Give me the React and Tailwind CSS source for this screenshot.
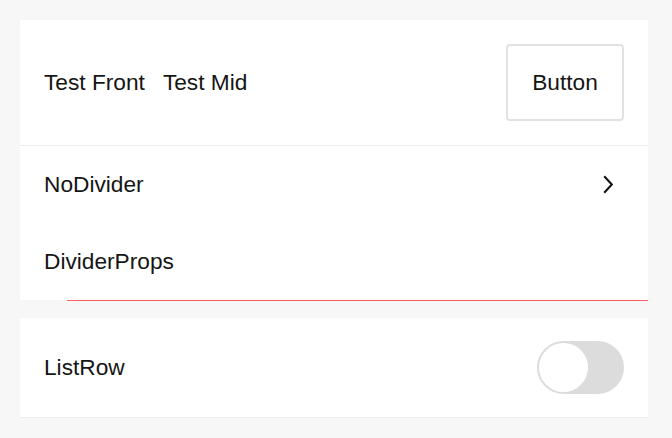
import React from 'react'

function Row({ children, className = '' }) {
	return (
		<div className={`flex items-center justify-between bg-white px-6 ${className}`}>
			{children}
		</div>
	)
}

export default function App() {
	return (
		<div
			className="min-h-screen bg-[#f7f7f7] pt-5 pl-5 pr-6 text-[22.7px] text-[#151515]"
			style={{ fontFamily: '"Liberation Sans", Arial, sans-serif' }}
		>
			{/* First group */}
			<div>
				<Row className="py-6 border-b border-[#ececec]">
					<div className="flex items-center gap-[18px]">
						<span>Test Front</span>
						<span>Test Mid</span>
					</div>
					<button className="w-[118px] h-[77px] rounded-[4px] border-2 border-[#e2e2e2] bg-white text-[22.7px] text-[#151515]">
						Button
					</button>
				</Row>

				<Row className="h-[77px]">
					<span>NoDivider</span>
					<svg width="10" height="19" viewBox="0 0 10 19" className="mr-[11px]">
						<polyline points="1.2,1.2 8.8,9.5 1.2,17.8" fill="none" stroke="#111" strokeWidth="2" />
					</svg>
				</Row>

				<Row className="h-[77px]">
					<span>DividerProps</span>
				</Row>
				<div className="ml-[47px] border-t border-[#ff5c64]" />
			</div>

			{/* Second group */}
			<div className="mt-[17px] border-b border-[#ececec]">
				<Row className="py-[23px]">
					<span>ListRow</span>
					<div className="w-[87px] h-[53px] rounded-full bg-[#dcdcdc] p-[2px]">
						<div className="w-[49px] h-[49px] rounded-full bg-white" />
					</div>
				</Row>
			</div>
		</div>
	)
}
